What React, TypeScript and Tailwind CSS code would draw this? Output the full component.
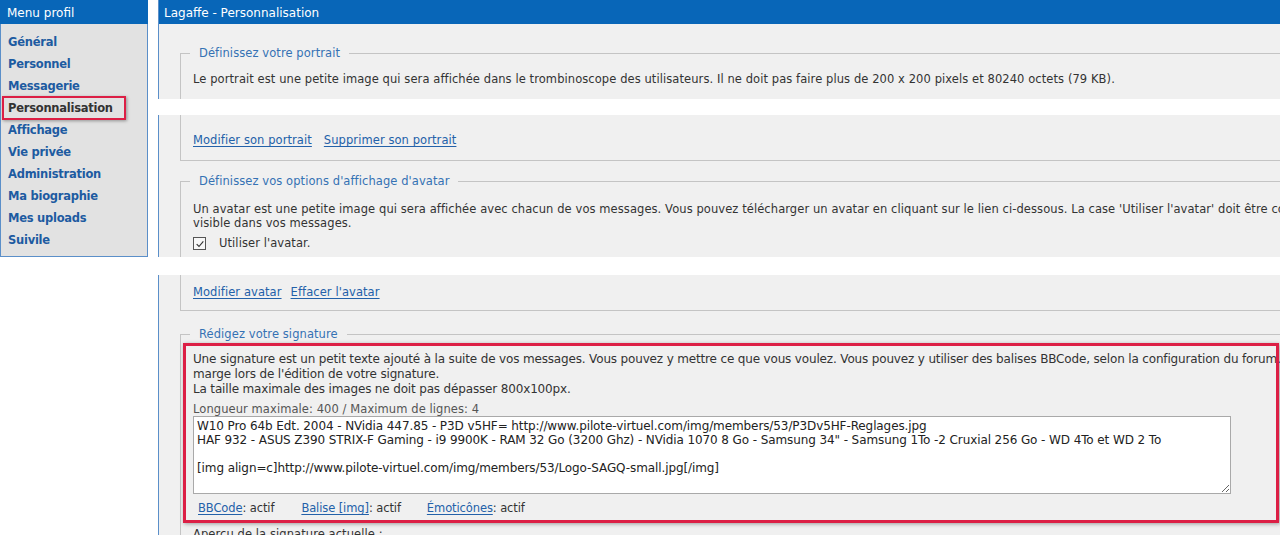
import React from "react";

const menu = [
  "Général",
  "Personnel",
  "Messagerie",
  "Personnalisation",
  "Affichage",
  "Vie privée",
  "Administration",
  "Ma biographie",
  "Mes uploads",
  "Suivile",
];

const sigText =
  "W10 Pro 64b Edt. 2004 - NVidia 447.85 - P3D v5HF= http://www.pilote-virtuel.com/img/members/53/P3Dv5HF-Reglages.jpg\nHAF 932 - ASUS Z390 STRIX-F Gaming - i9 9900K - RAM 32 Go (3200 Ghz) - NVidia 1070 8 Go - Samsung 34\" - Samsung 1To -2 Cruxial 256 Go - WD 4To et WD 2 To\n\n[img align=c]http://www.pilote-virtuel.com/img/members/53/Logo-SAGQ-small.jpg[/img]";

function Link({ children, className = "" }: { children: React.ReactNode; className?: string }) {
  return <a className={"text-[#2361a9] underline underline-offset-2 cursor-pointer " + className}>{children}</a>;
}

export default function App() {
  return (
    <div className="w-[1280px] h-[535px] overflow-hidden bg-white flex items-start font-['DejaVu_Sans',sans-serif] text-[11.5px] tracking-[0.08px] text-[#333]">
      {/* Left menu */}
      <aside className="relative w-[148px] shrink-0 flex flex-col">
        <div className="h-[24px] bg-[#0866b8] text-white text-[12px] tracking-normal flex items-center pt-[2px] px-[7px]">Menu profil</div>
        <ul className="bg-[#e2e2e2] border-x border-b border-[#5b8fc9] pt-[8px] pb-[4px]">
          {menu.map((m) => (
            <li key={m} className="h-[22px] flex items-center px-[7px]">
              <a className={"font-bold text-[11.5px] tracking-[-0.25px] cursor-pointer " + (m === "Personnalisation" ? "text-[#333]" : "text-[#1d5ba1]")}>{m}</a>
            </li>
          ))}
        </ul>
        <div className="absolute left-[2px] top-[96px] w-[124px] h-[24px] border-2 border-[#dc1f45] shadow-[1px_1px_3px_rgba(0,0,0,0.35)]" />
      </aside>

      {/* Main */}
      <main className="ml-[10px] w-[1200px] shrink-0 flex flex-col">
        {/* Section A */}
        <section className="h-[99px] overflow-hidden bg-[#f0f0f0] border-l border-[#5b8fc9]">
          <div className="h-[24px] bg-[#0866b8] text-white text-[12px] tracking-normal flex items-center pt-[2px] px-[6px] -ml-px">Lagaffe - Personnalisation</div>
          <fieldset className="ml-[21px] mt-[21px] h-[80px] border border-b-0 border-r-0 border-[#c4c4c4] pl-[12px]">
            <legend className="-ml-[3px] px-[9px] leading-[16px] text-[#3572b4]">Définissez votre portrait</legend>
            <p className="mt-[10px] leading-[16px] whitespace-nowrap">
              Le portrait est une petite image qui sera affichée dans le trombinoscope des utilisateurs. Il ne doit pas faire plus de 200 x 200 pixels et 80240 octets (79 KB).
            </p>
          </fieldset>
        </section>

        <div className="h-[16px]" />

        {/* Section B */}
        <section className="h-[142px] overflow-hidden bg-[#f0f0f0] border-l border-[#5b8fc9]">
          <div className="ml-[21px] h-[46px] border-l border-b border-[#c4c4c4] pl-[12px] pt-[17px] leading-[16px]">
            <Link>Modifier son portrait</Link>
            <Link className="ml-[12px]">Supprimer son portrait</Link>
          </div>
          <fieldset className="ml-[21px] mt-[12px] h-[100px] border border-b-0 border-r-0 border-[#c4c4c4] pl-[12px]">
            <legend className="-ml-[3px] px-[9px] leading-[16px] text-[#3572b4]">Définissez vos options d'affichage d'avatar</legend>
            <p className="mt-[13px] leading-[14px] whitespace-nowrap">
              Un avatar est une petite image qui sera affichée avec chacun de vos messages. Vous pouvez télécharger un avatar en cliquant sur le lien ci-dessous. La case 'Utiliser l'avatar' doit être cochée pour que l'avatar soit
              <br />
              visible dans vos messages.
            </p>
            <label className="mt-[6px] flex items-center h-[15px]">
              <span className="w-[13px] h-[13px] border border-[#555] bg-[#f7f7f7] flex items-center justify-center">
                <svg viewBox="0 0 12 12" className="w-[10px] h-[10px]">
                  <path d="M2 6.2 L4.8 9 L10 2.8" fill="none" stroke="#333" strokeWidth="1.4" />
                </svg>
              </span>
              <span className="ml-[13px]">Utiliser l'avatar.</span>
            </label>
          </fieldset>
        </section>

        <div className="h-[18px]" />

        {/* Section C */}
        <section className="relative h-[270px] overflow-hidden bg-[#f0f0f0] border-l border-[#5b8fc9]">
          <div className="ml-[21px] h-[36px] border-l border-b border-[#c4c4c4] pl-[12px] pt-[9px] leading-[16px]">
            <Link>Modifier avatar</Link>
            <Link className="ml-[9px]">Effacer l'avatar</Link>
          </div>
          <fieldset className="ml-[21px] mt-[15px] h-[240px] border border-b-0 border-r-0 border-[#c4c4c4] pl-[12px]">
            <legend className="-ml-[3px] px-[9px] leading-[16px] text-[#3572b4]">Rédigez votre signature</legend>
            <p className="mt-[10px] leading-[15px] whitespace-nowrap text-[12px] tracking-[-0.16px]">
              Une signature est un petit texte ajouté à la suite de vos messages. Vous pouvez y mettre ce que vous voulez. Vous pouvez y utiliser des balises BBCode, selon la configuration du forum. Les retours à la ligne sont pris en compte dans la
              <br />
              marge lors de l'édition de votre signature.
              <br />
              La taille maximale des images ne doit pas dépasser 800x100px.
            </p>
            <p className="mt-[6px] leading-[13px] text-[#555]">Longueur maximale: 400 / Maximum de lignes: 4</p>
            <textarea
              readOnly
              defaultValue={sigText}
              className="block w-[1038px] h-[78px] bg-white border border-[#a9a9a9] px-[3px] pt-[2px] text-[12px] tracking-[-0.1px] leading-[14px] text-[#222] font-['DejaVu_Sans',sans-serif] outline-none overflow-hidden whitespace-pre"
            />
            <p className="mt-[7px] leading-[15px] pl-[5px] whitespace-nowrap tracking-[-0.1px]">
              <Link>BBCode</Link>: actif
              <Link className="ml-[27px]">Balise [img]</Link>: actif
              <Link className="ml-[26px]">Émoticônes</Link>: actif
            </p>
            <p className="mt-[11px] leading-[15px]">Aperçu de la signature actuelle :</p>
          </fieldset>
          <div className="absolute left-[24px] top-[68px] w-[1096px] h-[180px] border-[3px] border-[#dc1f45] shadow-[1px_1px_4px_rgba(0,0,0,0.35)] pointer-events-none" />
        </section>
      </main>
    </div>
  );
}
